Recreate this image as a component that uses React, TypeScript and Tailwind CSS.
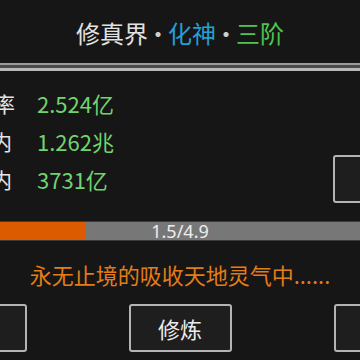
import React from "react";

const cjk = { fontFamily: '"Noto Sans CJK SC", "Noto Sans", sans-serif' };

function Btn({ children }: { children?: React.ReactNode }) {
  return (
    <div className="w-[103px] h-[48px] shrink-0 rounded-[3px] border-2 border-[#b4b4b4] bg-[#1e1e1e] flex items-center justify-center text-[22px] text-[#ececec]">
      {children}
    </div>
  );
}

function Row({ label, value, lm }: { label: string; value: string; lm: string }) {
  return (
    <div className="flex items-center h-[38px]">
      <div className="w-[37px] overflow-visible flex">
        <span className={`text-[21px] text-[#e4e4e4] leading-none ${lm}`}>{label}</span>
      </div>
      <span className="text-[22px] text-[#6fd46f] leading-none">{value}</span>
    </div>
  );
}

export default function App() {
  return (
    <div className="w-[360px] h-[360px] overflow-hidden bg-[#161616] flex flex-col" style={cjk}>
      <div className="h-[63px] flex items-center justify-center text-[24px] leading-none pt-[2px]">
        <span className="text-[#e2e2e2]">修真界</span>
        <span className="text-[#cfcfcf] -mx-[2px]">·</span>
        <span className="text-[#22a0d6]">化神</span>
        <span className="text-[#cfcfcf] -mx-[2px]">·</span>
        <span className="text-[#4fc24f]">三阶</span>
      </div>
      <div className="flex flex-col">
        <div className="h-[2px] bg-[#9a9a9a]" />
        <div className="h-[3px] bg-[#4a4a4a]" />
        <div className="h-[3px] bg-[#b8b8b8]" />
      </div>
      <div className="flex justify-between pt-[13px] h-[132px]">
        <div className="flex flex-col">
          <Row label="率" value="2.524亿" lm="-ml-[6px]" />
          <Row label="内" value="1.262兆" lm="-ml-[9px]" />
          <Row label="内" value="3731亿" lm="-ml-[9px]" />
        </div>
        <div className="mt-[71px] -mr-[76px]">
          <Btn />
        </div>
      </div>
      <div className="mt-[18px] h-[20px] bg-[#777777] border-y border-[#3a3a3a] relative flex items-center justify-center">
        <div className="absolute left-0 top-0 bottom-0 w-[85px] bg-[#dc5a00]" />
        <span className="relative text-[18px] leading-none text-[#ededed]" style={{ fontFamily: '"Noto Sans", sans-serif' }}>
          1.5/4.9
        </span>
      </div>
      <div className="mt-[18px] h-[30px] flex items-center justify-center text-[22px] text-[#e27d18] leading-none whitespace-nowrap">
        永无止境的吸收天地灵气中......
      </div>
      <div className="mt-[15px] flex justify-center gap-[102px]">
        <Btn />
        <Btn>修炼</Btn>
        <Btn />
      </div>
    </div>
  );
}
